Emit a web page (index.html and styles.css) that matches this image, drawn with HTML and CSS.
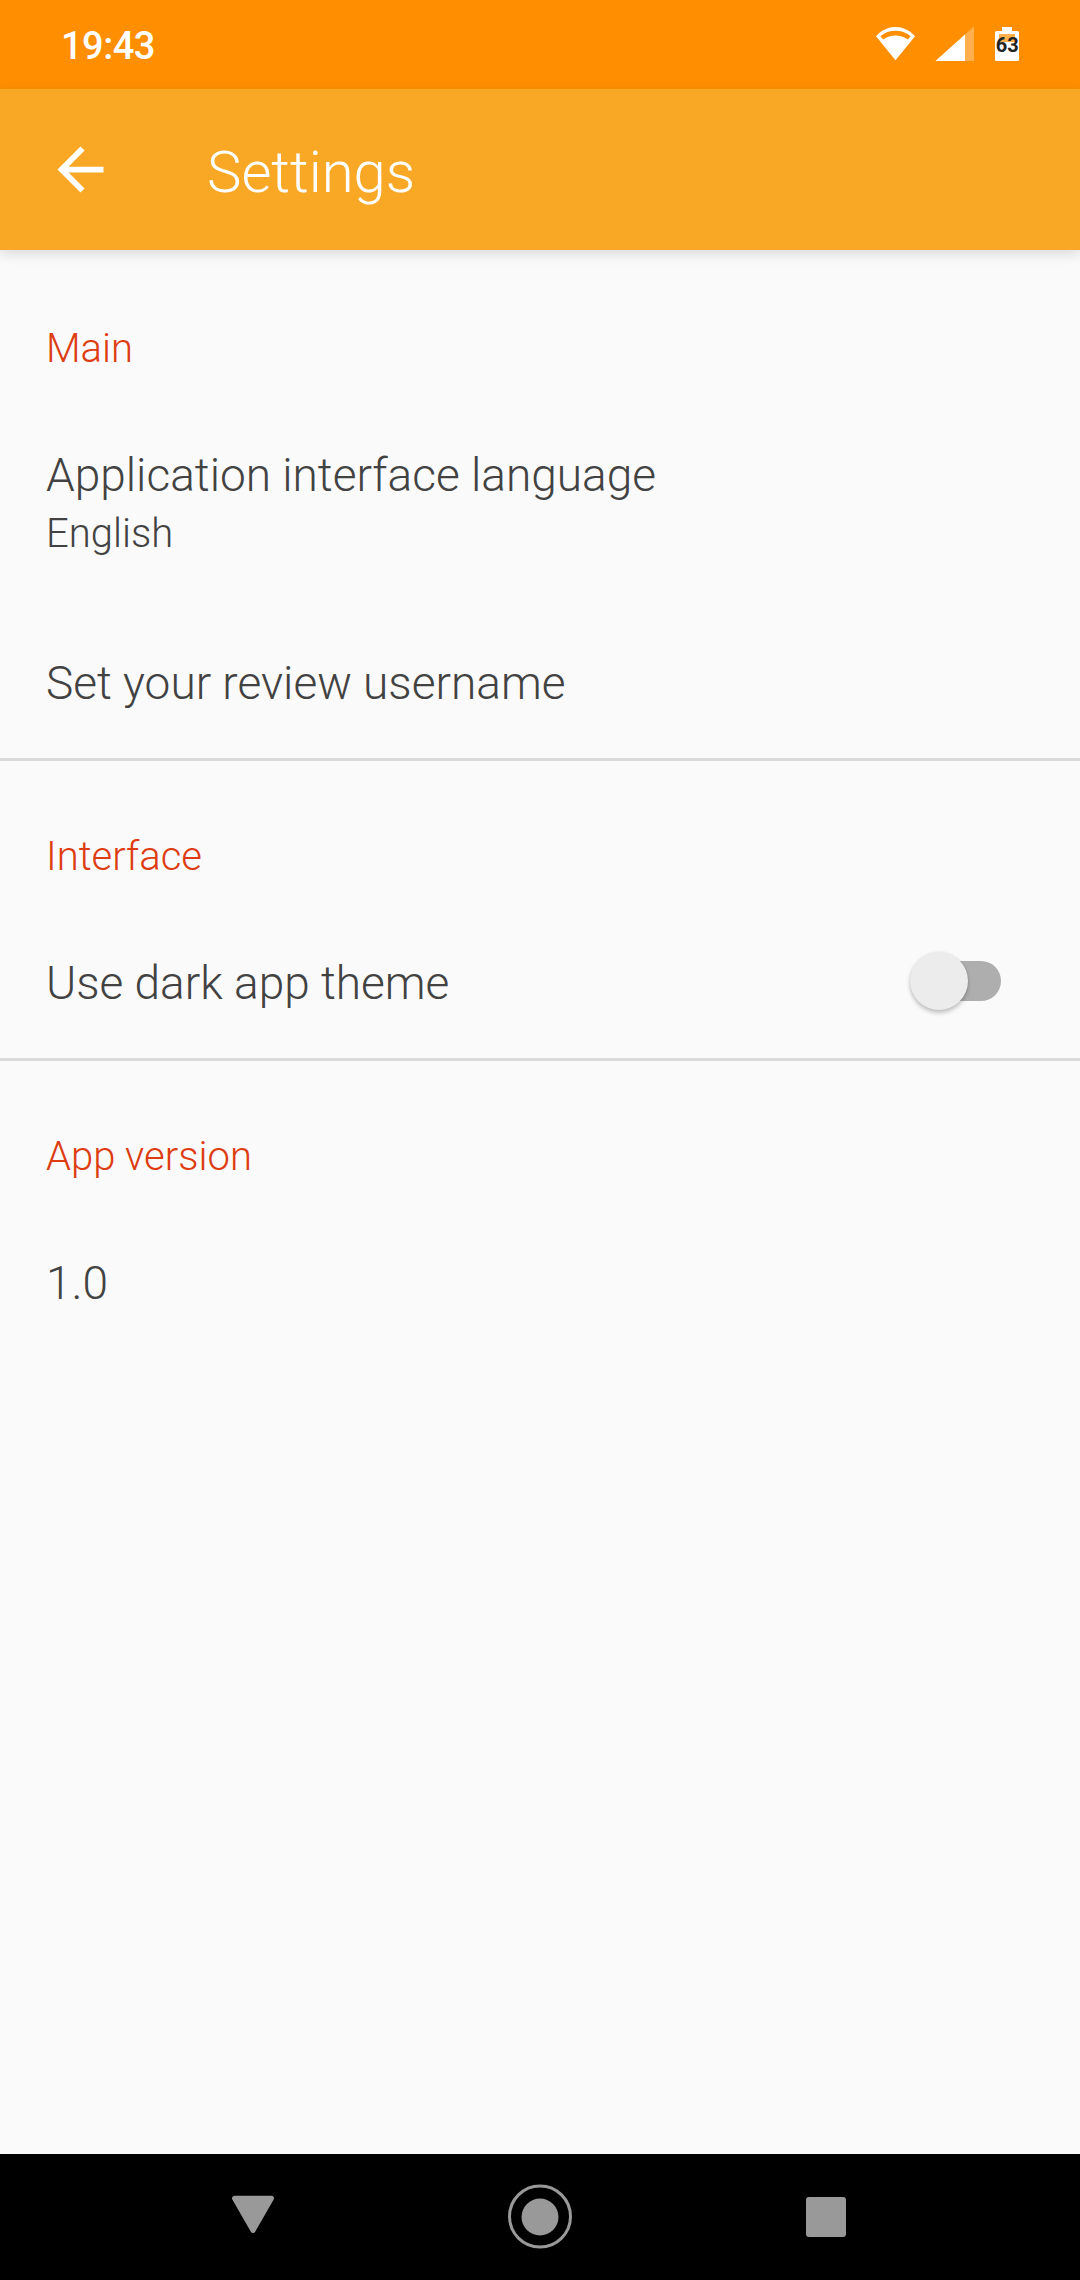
FILE: index.html
```html
<!DOCTYPE html>
<html lang="en">
<head>
<meta charset="utf-8">
<title>Settings</title>
<link rel="stylesheet" href="styles.css">
</head>
<body>
<div class="screen">
  <div class="status-bar">
    <span class="clock">19:43</span>
    <svg class="status-icons" width="146" height="36" viewBox="875 26 146 36" aria-hidden="true">
      <path fill="#fff" fill-rule="evenodd" d="M895.5 60.2 876 36.3C881 30.4 888 27 895.5 27S910 30.4 915 36.3ZM883.2 39.6C890.5 34 900.5 34 907.8 39.6L910.6 36.2C902 29 889 29 880.4 36.2Z"/>
      <path fill="#fff" fill-opacity=".3" d="M974 26.5V61H935.5Z"/>
      <path fill="#fff" d="M965 34.6V61H935.5Z"/>
      <path fill="#fff" d="M1002 27h10v4h5.4q1.6 0 1.6 1.6v26.8q0 1.6-1.6 1.6h-20.8q-1.6 0-1.6-1.6v-26.8q0-1.6 1.6-1.6h5.4Z"/>
      <path fill="#ffb04d" d="M999 34h16v8h-16z"/>
      <text class="battery-level" x="1007.3" y="52">63</text>
    </svg>
  </div>

  <header class="app-bar">
    <svg class="back" width="69" height="69" viewBox="0 0 24 24" role="img" aria-label="Back"><path fill="#fff" d="M20 11H7.83l5.59-5.59L12 4l-8 8 8 8 1.41-1.41L7.83 13H20v-2z"/></svg>
    <h1 class="title">Settings</h1>
  </header>

  <main class="settings">
    <section class="group">
      <h2 class="category">Main</h2>
      <div class="row">
        <div class="label">Application interface language</div>
        <div class="summary">English</div>
      </div>
      <div class="row"><div class="label">Set your review username</div></div>
    </section>
    <section class="group">
      <h2 class="category">Interface</h2>
      <div class="row row-switch">
        <div class="label">Use dark app theme</div>
        <div class="switch"><div class="thumb"></div></div>
      </div>
    </section>
    <section class="group">
      <h2 class="category">App version</h2>
      <div class="row"><div class="label">1.0</div></div>
    </section>
  </main>

  <nav class="nav-bar">
    <svg width="66" height="66" viewBox="220 2184 66 66"><path fill="#999" stroke="#999" stroke-width="5" stroke-linejoin="round" d="M234.5 2198.3H271.5L253 2230.5Z"/></svg>
    <svg width="66" height="66" viewBox="507 2184 66 66"><circle cx="540" cy="2216.5" r="30.5" fill="none" stroke="#999" stroke-width="3"/><circle cx="540" cy="2217" r="18.5" fill="#999"/></svg>
    <svg width="66" height="66" viewBox="793 2184 66 66"><rect x="806" y="2197" width="40" height="40" rx="3" fill="#999"/></svg>
  </nav>
</div>
</body>
</html>
```
FILE: styles.css
```css
body {
  margin: 0;
  font-family: Roboto, "Noto Sans", sans-serif;
  font-weight: 300;
}

.screen {
  display: flex;
  flex-direction: column;
  width: 1080px;
  height: 2280px;
  background: #fafafa;
  overflow: hidden;
}

.status-bar {
  display: flex;
  justify-content: space-between;
  height: 89px;
  box-sizing: border-box;
  padding: 23px 59px 0 61px;
  background: #ff8f00;
  color: #fff;
}

.clock {
  padding-top: 1px;
  font-size: 38px;
  line-height: 45px;
  letter-spacing: -.5px;
  font-weight: 500;
}

.status-icons {
  margin-top: 3px;
}

.battery-level {
  font-size: 20px;
  font-weight: 700;
  fill: #222;
  text-anchor: middle;
}

.app-bar {
  display: flex;
  align-items: center;
  height: 161px;
  padding-left: 46px;
  background: #f9a825;
  color: #fff;
  box-shadow: 0 4px 12px rgba(0, 0, 0, .13);
}

.title {
  margin: 5px 0 0 92px;
  font-size: 58px;
  line-height: 68px;
  font-weight: 300;
}

.settings {
  flex: 1;
}

.group {
  border-top: 3px solid #dadada;
}

.group:first-child {
  border-top-color: transparent;
}

.category {
  margin: 0;
  padding: 72px 46px 28px;
  font-size: 40px;
  line-height: 47px;
  font-weight: 300;
  color: #dd3c10;
}

.row {
  padding: 48px 46px;
  color: #424242;
}

.label {
  font-size: 46px;
  line-height: 54px;
}

.summary {
  padding: 7px 0 1px;
  font-size: 40px;
  line-height: 50px;
}

.row-switch {
  display: flex;
  align-items: center;
  justify-content: space-between;
  padding-right: 79px;
}

.switch {
  display: flex;
  align-items: center;
  width: 91px;
  height: 40px;
  margin-top: -4px;
  background: linear-gradient(#aeaeae, #aeaeae) right / 60px 40px no-repeat;
  border-radius: 20px;
}

.thumb {
  width: 58px;
  height: 58px;
  flex: none;
  border-radius: 50%;
  background: #ececec;
  box-shadow: 0 3px 4px rgba(0, 0, 0, .22), 0 0 3px rgba(0, 0, 0, .08);
}

.nav-bar {
  display: flex;
  justify-content: space-between;
  align-items: flex-start;
  height: 126px;
  box-sizing: border-box;
  padding: 30px 221px 0 220px;
  background: #000;
}
```
